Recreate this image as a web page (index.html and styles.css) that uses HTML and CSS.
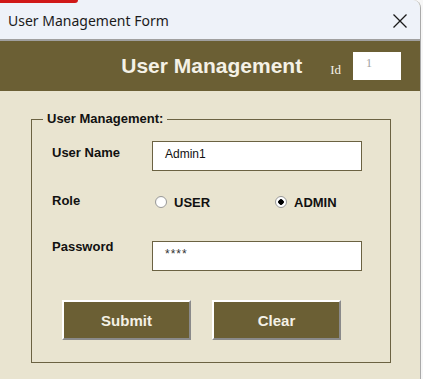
FILE: index.html
```html
<!DOCTYPE html>
<html lang="en">
<head>
    <meta charset="UTF-8">
    <meta name="viewport" content="width=device-width, initial-scale=1.0">
    <title>User Management Form</title>
    <link rel="stylesheet" href="styles.css">
</head>
<body>
    <div class="behind"></div>
    <div class="window">
        <div class="titlebar">
            <span class="title">User Management Form</span>
            <svg class="close" width="16" height="16" viewBox="0 0 16 16">
                <path d="M1.5 1.5 L14.5 14.5 M14.5 1.5 L1.5 14.5" stroke="#1a1a1a" stroke-width="1.3" fill="none"/>
            </svg>
        </div>
        <div class="frame">
            <div class="header">
                <h1>User Management</h1>
                <span class="id-label">Id</span>
                <div class="id-box">1</div>
            </div>
            <div class="body">
                <fieldset class="group">
                    <legend>User Management:</legend>
                    <div class="row row-name">
                        <label class="label">User Name</label>
                        <div class="textbox">Admin1</div>
                    </div>
                    <div class="row row-role">
                        <label class="label">Role</label>
                        <div class="radios">
                            <label class="radio"><input type="radio" name="role"> USER</label>
                            <label class="radio"><input type="radio" name="role" checked> ADMIN</label>
                        </div>
                    </div>
                    <div class="row row-pass">
                        <label class="label">Password</label>
                        <div class="textbox secret">****</div>
                    </div>
                    <div class="buttons">
                        <button type="button">Submit</button>
                        <button type="button">Clear</button>
                    </div>
                </fieldset>
            </div>
        </div>
    </div>
</body>
</html>
```

FILE: styles.css
```css
body {
    margin: 0;
    width: 423px;
    height: 379px;
    overflow: hidden;
    background-color: #f7f7f7;
    font-family: "Liberation Sans", Arial, sans-serif;
}
.behind {
    position: absolute;
    left: 0;
    top: 0;
    width: 78px;
    height: 3px;
    background-color: #d01818;
    border-bottom-right-radius: 3px;
}
.window {
    width: 420px;
    height: 379px;
    background-color: #e9e4d0;
    border-right: 1px solid #a9a9a9;
    border-top-right-radius: 8px;
    overflow: hidden;
}
.titlebar {
    height: 41px;
    background-color: #eef2f9;
    border-bottom: 2px solid #a0a0a0;
    display: flex;
    align-items: center;
    justify-content: space-between;
    padding: 0 12px 0 8px;
    box-sizing: border-box;
}
.title {
    font-family: "Noto Sans", sans-serif;
    font-size: 14px;
    color: #1b1b1b;
    margin-top: 2px;
}
.close {
    margin-top: 2px;
}
.header {
    height: 50px;
    background-color: #6b5f34;
    display: flex;
    align-items: center;
    justify-content: flex-end;
    padding-right: 19px;
}
.header h1 {
    margin: 0 28px 0 0;
    font-size: 21px;
    font-weight: bold;
    color: #f4f1e6;
}
.id-label {
    font-family: "Liberation Serif", serif;
    font-size: 13px;
    color: #f4f1e6;
    margin: 8px 12px 0 0;
}
.id-box {
    width: 48px;
    height: 28px;
    box-sizing: border-box;
    background: white;
    font-family: "Liberation Serif", serif;
    font-size: 12px;
    color: #a0a0a0;
    padding: 4px 0 0 13px;
}
.body {
    padding: 20px 0 0 31px;
}
.group {
    width: 360px;
    min-width: 0;
    box-sizing: border-box;
    margin: 0;
    padding: 0 20px 22px 20px;
    border: 1px solid #6b6242;
}
.group legend {
    font-size: 13px;
    font-weight: bold;
    color: #111;
    margin-left: -9px;
    padding: 0 4px;
    line-height: 16px;
}
.row {
    display: flex;
}
.label {
    width: 100px;
    flex-shrink: 0;
    font-size: 13px;
    font-weight: bold;
    color: #111;
}
.row-name {
    margin-top: 14px;
}
.row-name .label {
    padding-top: 4px;
}
.row-role {
    margin-top: 16px;
    height: 30px;
    align-items: center;
}
.row-role .label {
    margin-top: -3px;
}
.row-pass {
    margin-top: 24px;
}
.row-pass .label {
    margin-top: -2px;
}
.textbox {
    width: 210px;
    height: 30px;
    box-sizing: border-box;
    background: white;
    border: 1px solid #6b6242;
    font-size: 12px;
    color: #111;
    padding: 5px 0 0 12px;
}
.secret {
    color: #333;
    letter-spacing: 1px;
}
.radios {
    display: flex;
    padding-left: 3px;
}
.radio {
    display: flex;
    align-items: center;
    font-size: 13px;
    font-weight: bold;
    color: #111;
}
.radio:first-child {
    width: 120px;
}
.radio input {
    appearance: none;
    width: 12px;
    height: 12px;
    margin: 0 7px 0 0;
    border-radius: 50%;
    border: 1px solid #9a9a9a;
    background: radial-gradient(circle at 60% 60%, #ffffff 55%, #e4e4e4);
    box-sizing: border-box;
}
.radio input:checked {
    background: radial-gradient(circle, #000 2.5px, #ffffff 3px);
}
.buttons {
    display: flex;
    gap: 21px;
    margin: 29px 0 0 10px;
}
.buttons button {
    width: 129px;
    height: 40px;
    background-color: #6b5f34;
    border: 2px solid;
    border-color: #ffffff #8a8a8a #8a8a8a #ffffff;
    color: #f4f1e6;
    font-family: "Liberation Sans", Arial, sans-serif;
    font-size: 15px;
    font-weight: bold;
}
```
